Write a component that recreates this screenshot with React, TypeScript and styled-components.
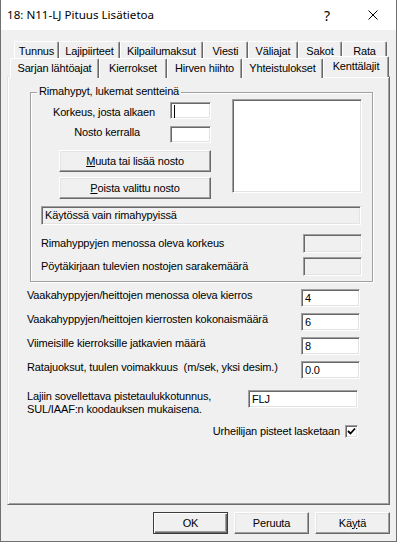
import React from 'react';
import styled, {createGlobalStyle} from 'styled-components';

const Global = createGlobalStyle`
  body {
    margin: 0;
    background: #ffffff;
  }
`;

const Window = styled.div`
  width: 397px;
  height: 542px;
  box-sizing: border-box;
  border: 1px solid #707070;
  border-top: none;
  display: flex;
  flex-direction: column;
  background: #f0f0f0;
  font-family: "Liberation Sans", Arial, sans-serif;
  font-size: 11px;
  line-height: 13px;
  letter-spacing: -0.15px;
  color: #000;
`;

const TitleBar = styled.div`
  height: 30px;
  flex: none;
  background: #ffffff;
  display: flex;
  align-items: center;
  padding-left: 6px;
`;

const Title = styled.div`
  flex: 1;
  font-family: "Noto Sans", "Open Sans", sans-serif;
  font-size: 11.6px;
  line-height: 16px;
  letter-spacing: 0;
`;

const TitleButton = styled.div<{ $w: number }>`
  width: ${p => p.$w}px;
  height: 30px;
  display: flex;
  align-items: center;
  justify-content: center;
  font-family: "Noto Sans", sans-serif;
  font-size: 14px;
`;

const Body = styled.div`
  flex: 1;
  display: flex;
  flex-direction: column;
  padding: 11px 6px 0 6px;
`;

const TabRow = styled.div<{ $indent: number; $h: number }>`
  display: flex;
  align-items: flex-end;
  height: ${p => p.$h}px;
  margin-left: ${p => p.$indent}px;
`;

const Tab = styled.div<{ $w: number; $active?: boolean }>`
  position: relative;
  z-index: ${p => (p.$active ? 2 : 1)};
  box-sizing: border-box;
  width: ${p => p.$w}px;
  height: ${p => (p.$active ? 21 : 20)}px;
  margin-bottom: ${p => (p.$active ? -1 : -2)}px;
  align-self: flex-start;
  margin-top: ${p => (p.$active ? -2 : 0)}px;
  background: #f0f0f0;
  border-left: 1px solid #ffffff;
  border-top: 1px solid #ffffff;
  border-right: 1px solid #696969;
  border-radius: 2px 2px 0 0;
  box-shadow: inset -1px 0 0 #a0a0a0;
  text-align: center;
  padding-top: 3px;
  white-space: nowrap;
`;

const Panel = styled.div`
  position: relative;
  box-sizing: border-box;
  height: 429px;
  flex: none;
  border-style: solid;
  border-width: 1px;
  border-color: #e3e3e3 #696969 #696969 #e3e3e3;
  box-shadow: inset 1px 1px 0 #ffffff, inset -1px -1px 0 #a0a0a0;
  padding: 15px 0 0 0;
`;

const Group = styled.div`
  position: relative;
  box-sizing: border-box;
  width: 343px;
  height: 190px;
  margin-left: 22px;
  border: 1px solid #a0a0a0;
  box-shadow: 1px 1px 0 #ffffff, inset 1px 1px 0 #ffffff;
  padding: 6px 10px 0 10px;
`;

const GroupLabel = styled.div`
  position: absolute;
  left: 6px;
  top: -8px;
  padding: 0 2px;
  background: #f0f0f0;
`;

const TopSection = styled.div`
  display: flex;
  justify-content: space-between;
  height: 100px;
`;

const LeftColumn = styled.div`
  width: 170px;
  display: flex;
  flex-direction: column;
  align-items: flex-end;
  padding-top: 3px;
`;

const FieldRow = styled.div<{ $gap: number; $mb: number }>`
  display: flex;
  align-items: flex-start;
  gap: ${p => p.$gap}px;
  margin-bottom: ${p => p.$mb}px;
`;

const Label = styled.div<{ $top?: number }>`
  padding-top: ${p => p.$top ?? 0}px;
  white-space: nowrap;
`;

const Edit = styled.div<{ $w: number; $h: number; $disabled?: boolean }>`
  position: relative;
  box-sizing: border-box;
  width: ${p => p.$w}px;
  height: ${p => p.$h}px;
  flex: none;
  background: ${p => (p.$disabled ? '#f0f0f0' : '#ffffff')};
  border: 1px solid;
  border-color: #a0a0a0 #ffffff #ffffff #a0a0a0;
  box-shadow: inset 1px 1px 0 #696969, inset -1px -1px 0 #e3e3e3;
  padding: 2px 0 0 3px;
  white-space: nowrap;
`;

const Caret = styled.div`
  position: absolute;
  left: 3px;
  top: 2px;
  width: 1px;
  height: 13px;
  background: #000;
`;

const Button = styled.div<{ $w: number; $default?: boolean }>`
  box-sizing: border-box;
  width: ${p => p.$w}px;
  height: 22px;
  flex: none;
  display: flex;
  align-items: center;
  justify-content: center;
  background: #f0f0f0;
  border: 1px solid;
  border-color: ${p => (p.$default ? '#3c3c3c' : '#ffffff #696969 #696969 #ffffff')};
  box-shadow: ${p =>
    p.$default
      ? 'inset 1px 1px 0 #ffffff, inset -1px -1px 0 #696969, inset -2px -2px 0 #a0a0a0'
      : 'inset -1px -1px 0 #a0a0a0, inset 1px 1px 0 #e3e3e3'};
`;

const Key = styled.span`
  text-decoration: underline;
`;

const ListBox = styled.div`
  box-sizing: border-box;
  width: 130px;
  height: 94px;
  background: #ffffff;
  border: 1px solid;
  border-color: #a0a0a0 #ffffff #ffffff #a0a0a0;
  box-shadow: inset 1px 1px 0 #696969, inset -1px -1px 0 #e3e3e3;
`;

const InfoRow = styled.div<{ $mt: number }>`
  display: flex;
  justify-content: space-between;
  align-items: center;
  margin-top: ${p => p.$mt}px;
`;

const Rows = styled.div`
  width: 333px;
  margin-left: 19px;
  display: flex;
  flex-direction: column;
`;

const Row = styled.div<{ $mt: number }>`
  display: flex;
  justify-content: space-between;
  align-items: flex-start;
  margin-top: ${p => p.$mt}px;
`;

const CheckRow = styled.div`
  display: flex;
  justify-content: flex-end;
  align-items: center;
  gap: 5px;
  margin-top: 9px;
  margin-right: 2px;
`;

const CheckBox = styled.div`
  box-sizing: border-box;
  width: 13px;
  height: 13px;
  background: #ffffff;
  border: 1px solid;
  border-color: #a0a0a0 #ffffff #ffffff #a0a0a0;
  box-shadow: inset 1px 1px 0 #696969, inset -1px -1px 0 #e3e3e3;
  display: flex;
  align-items: center;
  justify-content: center;
`;

const ButtonBar = styled.div`
  display: flex;
  justify-content: flex-end;
  gap: 6px;
  margin-top: 7px;
`;

const rowOneTabs = [
    {t: 'Tunnus', w: 45},
    {t: 'Lajipiirteet', w: 61},
    {t: 'Kilpailumaksut', w: 83},
    {t: 'Viesti', w: 45},
    {t: 'Väliajat', w: 50},
    {t: 'Sakot', w: 44},
    {t: 'Rata', w: 45},
];

const rowTwoTabs = [
    {t: 'Sarjan lähtöajat', w: 89},
    {t: 'Kierrokset', w: 68},
    {t: 'Hirven hiihto', w: 75},
    {t: 'Yhteistulokset', w: 81},
    {t: 'Kenttälajit', w: 66, active: true},
];

function App() {
    return (
        <Window>
            <Global/>
            <TitleBar>
                <Title>18: N11-LJ Pituus Lisätietoa</Title>
                <TitleButton $w={46}>?</TitleButton>
                <TitleButton $w={46}>
                    <svg width="10" height="10" viewBox="0 0 10 10">
                        <path d="M0.5 0.5 L9.5 9.5 M9.5 0.5 L0.5 9.5" stroke="#000" strokeWidth="1"/>
                    </svg>
                </TitleButton>
            </TitleBar>
            <Body>
                <TabRow $indent={7} $h={17}>
                    {rowOneTabs.map(x => <Tab key={x.t} $w={x.w}>{x.t}</Tab>)}
                </TabRow>
                <TabRow $indent={3} $h={18}>
                    {rowTwoTabs.map(x => <Tab key={x.t} $w={x.w} $active={x.active}>{x.t}</Tab>)}
                </TabRow>
                <Panel>
                    <Group>
                        <GroupLabel>Rimahypyt, lukemat sentteinä</GroupLabel>
                        <TopSection>
                            <LeftColumn>
                                <FieldRow $gap={15} $mb={7}>
                                    <Label $top={4}>Korkeus, josta alkaen</Label>
                                    <Edit $w={41} $h={17}><Caret/></Edit>
                                </FieldRow>
                                <FieldRow $gap={30} $mb={7}>
                                    <Label>Nosto kerralla</Label>
                                    <Edit $w={41} $h={17}/>
                                </FieldRow>
                                <Button $w={152}><span><Key>M</Key>uuta tai lisää nosto</span></Button>
                                <div style={{height: 5}}/>
                                <Button $w={152}><span><Key>P</Key>oista valittu nosto</span></Button>
                            </LeftColumn>
                            <ListBox/>
                        </TopSection>
                        <Edit $w={320} $h={19} $disabled style={{marginTop: 7}}>Käytössä vain rimahypyissä</Edit>
                        <InfoRow $mt={9}>
                            <Label>Rimahyppyjen menossa oleva korkeus</Label>
                            <Edit $w={59} $h={19} $disabled/>
                        </InfoRow>
                        <InfoRow $mt={4}>
                            <Label>Pöytäkirjaan tulevien nostojen sarakemäärä</Label>
                            <Edit $w={59} $h={19} $disabled/>
                        </InfoRow>
                    </Group>
                    <Rows>
                        <Row $mt={7}>
                            <Label>Vaakahyppyjen/heittojen menossa oleva kierros</Label>
                            <Edit $w={59} $h={18}>4</Edit>
                        </Row>
                        <Row $mt={6}>
                            <Label>Vaakahyppyjen/heittojen kierrosten kokonaismäärä</Label>
                            <Edit $w={59} $h={18}>6</Edit>
                        </Row>
                        <Row $mt={6}>
                            <Label>Viimeisille kierroksille jatkavien määrä</Label>
                            <Edit $w={59} $h={18}>8</Edit>
                        </Row>
                        <Row $mt={6}>
                            <Label>Ratajuoksut, tuulen voimakkuus&nbsp; (m/sek, yksi desim.)</Label>
                            <Edit $w={59} $h={18}>0.0</Edit>
                        </Row>
                        <Row $mt={11}>
                            <Label>Lajiin sovellettava pistetaulukkotunnus,<br/>SUL/IAAF:n koodauksen mukaisena.</Label>
                            <Edit $w={110} $h={18} style={{marginRight: 2}}>FLJ</Edit>
                        </Row>
                        <CheckRow>
                            <Label>Urheilijan pisteet lasketaan</Label>
                            <CheckBox>
                                <svg width="9" height="9" viewBox="0 0 9 9">
                                    <path d="M1 4 L3.5 6.5 L8 1.5" stroke="#000" strokeWidth="1.8" fill="none"/>
                                </svg>
                            </CheckBox>
                        </CheckRow>
                    </Rows>
                </Panel>
                <ButtonBar>
                    <Button $w={75} $default>OK</Button>
                    <Button $w={75}>Peruuta</Button>
                    <Button $w={75}><span>Kä<Key>y</Key>tä</span></Button>
                </ButtonBar>
            </Body>
        </Window>
    );
}

export default App;
